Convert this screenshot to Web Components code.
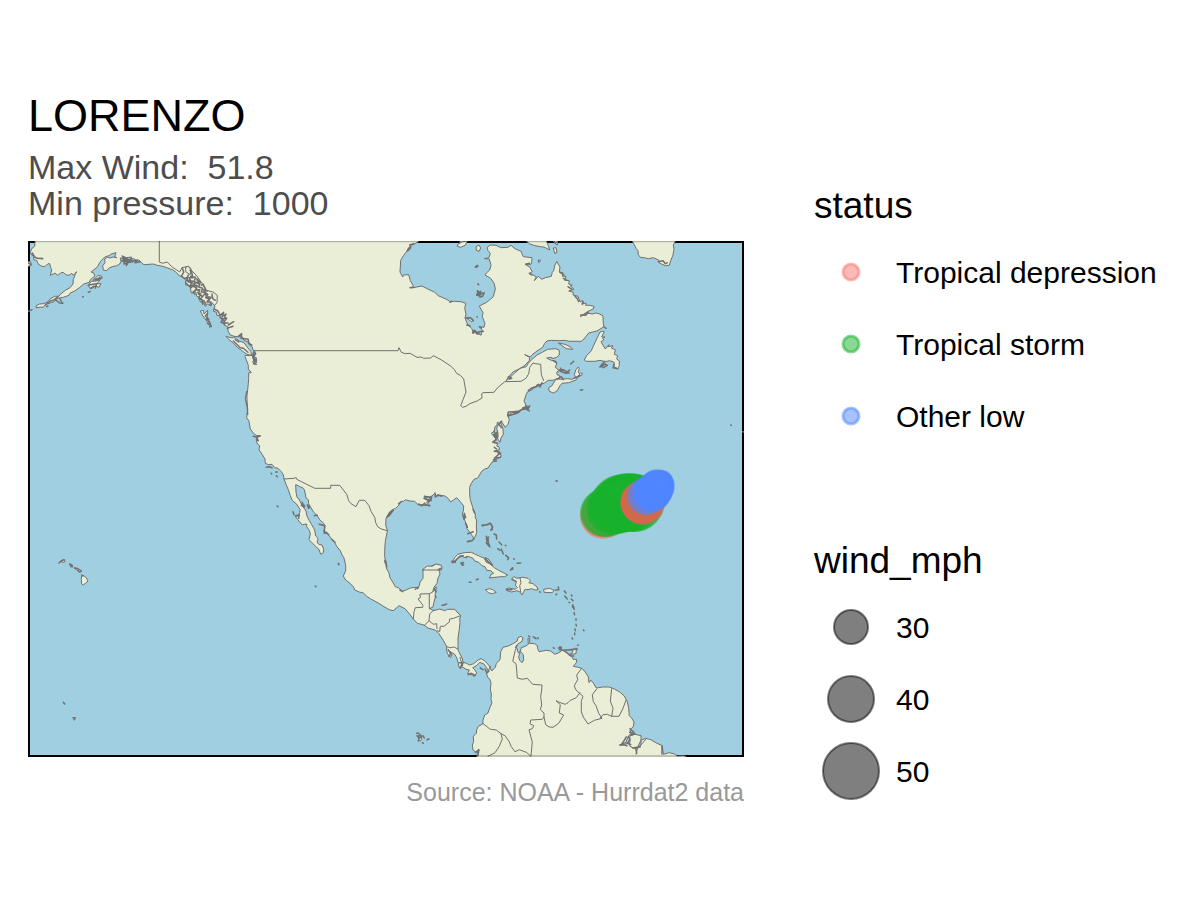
<!DOCTYPE html>
<html lang="en">
<head>
<meta charset="utf-8">
<meta name="viewport" content="width=device-width, initial-scale=1">
<title>LORENZO storm track</title>
<style>
body{margin:0;background:#fff;color:#000;font-family:"Liberation Sans",Arial,sans-serif}
</style>
</head>
<body>
<storm-report>
  <storm-figure slot="figure" name="LORENZO" wind="51.8" pressure="1000">
    <storm-map></storm-map>
    <span slot="caption">Source: NOAA - Hurrdat2 data</span>
  </storm-figure>
  <legend-group slot="legend" heading="status">
    <legend-item radius="8" ring="3" color="#f8766d">Tropical depression</legend-item>
    <legend-item radius="8" ring="3" color="#18b22b">Tropical storm</legend-item>
    <legend-item radius="8" ring="3" color="#5086ff">Other low</legend-item>
  </legend-group>
  <legend-group slot="legend" heading="wind_mph">
    <legend-item radius="17" ring="2" color="#000">30</legend-item>
    <legend-item radius="23" ring="2" color="#000">40</legend-item>
    <legend-item radius="28" ring="2" color="#000">50</legend-item>
  </legend-group>
</storm-report>
<script>
class StormReport extends HTMLElement{
  constructor(){
    super();
    this.attachShadow({mode:'open'}).innerHTML=`
<style>
:host{display:block}
main{box-sizing:border-box;min-height:100vh;padding:0 28px;display:grid;grid-template-columns:minmax(0,1fr) 358px;column-gap:70px;align-content:center;align-items:end}
aside{display:flex;flex-direction:column;gap:87px}
</style>
<main><slot name="figure"></slot><aside><slot name="legend"></slot></aside></main>`;
  }
}
class StormFigure extends HTMLElement{
  connectedCallback(){
    if(this.shadowRoot)return;
    this.attachShadow({mode:'open'}).innerHTML=`
<style>
:host{display:block}
figure{margin:0}
h1{margin:0 0 11px;font-size:45px;line-height:44px;font-weight:400}
p{margin:0;font-size:34px;line-height:36px;color:#4d4d4d;white-space:pre-wrap}
.map{margin:20px 0}
figcaption{font-size:25px;line-height:30px;color:#999;text-align:right}
</style>
<h1>${this.getAttribute('name')}</h1>
<p>Max Wind:  ${this.getAttribute('wind')}</p>
<p>Min pressure:  ${this.getAttribute('pressure')}</p>
<figure><div class="map"><slot></slot></div>
<figcaption><slot name="caption"></slot></figcaption></figure>`;
  }
}
class LegendGroup extends HTMLElement{
  connectedCallback(){
    if(this.shadowRoot)return;
    this.attachShadow({mode:'open'}).innerHTML=`
<style>
:host{display:block}
h2{margin:0 0 8px;font-size:37px;line-height:44px;font-weight:400}
</style>
<h2>${this.getAttribute('heading')}</h2><div role="list"><slot></slot></div>`;
  }
}
class LegendItem extends HTMLElement{
  connectedCallback(){
    if(this.shadowRoot)return;
    this.setAttribute('role','listitem');
    const c=this.getAttribute('color');
    this.attachShadow({mode:'open'}).innerHTML=`
<style>
:host{display:flex;align-items:center;gap:8px;height:72px;font-size:30px;line-height:36px;white-space:nowrap}
svg{width:74px;height:72px;flex:none}
span{padding-top:2px}
</style>
<svg viewBox="0 0 74 72" aria-hidden="true"><circle cx="37" cy="36" r="${this.getAttribute('radius')}" fill="${c}" stroke="${c}" stroke-width="${this.getAttribute('ring')}" fill-opacity=".5" stroke-opacity=".5"/></svg>
<span><slot></slot></span>`;
  }
}

/* Survey sheets: every sheet has an origin on the map and a grid of three units per map unit. */
const sheets={A:[20,235],B:[240,235],C:[460,235],D:[230,390],E:[440,370],G:[300,500],H:[440,520],I:[400,600],J:[20,530]};
const trace=s=>{
  let o=sheets.A,d='',pen='M';
  for(const t of s.trim().split(/\s+/)){
    if(sheets[t])o=sheets[t];
    else if(t==='/'){pen='M'}
    else if(t==='z'){d+='Z';pen='M'}
    else{const[x,y]=t.split(',').map(Number);d+=pen+(o[0]+x/3).toFixed(1)+' '+(o[1]+y/3).toFixed(1);pen='L'}
  }
  return d;
};
const mainland=`
A 45,0 45,22 44,34 36,40 31,52 35,60 42,64 41,74 50,76 54,86 64,93 73,95 80,90 84,86 89,86 92,98 95,105 91,121 100,117 105,114 113,121 122,114 130,112 137,119 147,121 155,115 160,121 165,115 170,110 166,118 160,134 159,147 150,158 136,166 121,178 117,184 104,184 90,192 84,200 72,206 58,207 48,213 49,219 60,216 70,217 78,207 91,204 104,199 111,190 130,187 147,181 151,174 164,168 180,157 190,148 207,142 214,131 224,124 221,114 213,111 222,104 232,96 237,87 241,80 248,72 256,65 267,62 274,57 288,53 284,65 291,68 279,66 270,69 262,67 254,72 255,83 248,92 250,105 259,107 268,99 277,95 290,92 299,87 303,79 301,69 312,70 306,62 319,68 335,66 330,73 342,71 350,77 357,75 366,85 372,89 400,87 412,91 428,94 443,99 459,105 470,113 476,121 490,127 497,136 497,150 510,152 514,174 527,170 530,184 537,186 541,201 549,200 556,214 563,206 573,213 576,203 585,213 580,229 590,232 590,241 601,243 604,253 613,258 612,270 623,275 624,288 630,299 642,304 653,305 668,306 671,316 683,320 688,330 697,335 699,345 706,350 703,365 709,368 710,382 703,388 698,381 704,370 697,361 688,362 676,361 675,364 680,378 685,391 685,402 694,413 686,413 686,430 684,455 682,474 677,490 679,507 683,520 683,540
D 50,3 46,25 52,48 52,65 50,83 57,94 61,117 70,129 78,136 92,138 80,141 84,153 78,148 82,162 89,167 87,179 97,194 105,207 106,220 116,224 126,223 134,233 144,235 154,245 160,254 162,267 168,283 175,299 181,317 187,332 199,341 210,358 209,368 204,379 195,378 203,388 210,398 217,404 230,402 230,410 238,421 241,432 237,449 249,461 262,474 266,477 272,493 280,488 281,478 276,465 267,463 262,459 264,445 257,438 254,420 245,404 238,392 231,378 228,363 221,353 213,340 207,327 201,322 198,306 197,284 205,287 211,291 217,292 223,299 226,312 228,324 235,329 236,341 242,352 252,368 261,376 269,389 281,400 285,408 281,426 293,431 303,445 314,458 321,470 331,482 336,495 341,502 346,520
G 137,198 137,211 134,219 130,228 137,240 150,250 160,260 164,270 178,276 190,279 200,289 211,296 235,309 252,320 268,329 280,332 288,325 297,317 315,326 326,339 340,357 352,370 372,375 384,384 402,389 408,392 416,400 430,421 440,440
I 140,150 142,160 151,173 156,165 149,154 164,163 171,175 175,190 177,202 188,201 198,208 208,210 203,221 219,225 222,230 230,219 224,209 218,203 231,196 239,187 252,192 262,206 265,215 259,220 264,233 269,237 273,250 271,268 274,282 273,298 276,308 269,324 264,339 254,345 249,360 248,372 235,379 230,389 229,400 220,409 221,424 217,435 219,450 229,458 234,449 231,464 230,500
860,500 858,469 850,467 832,468 824,462 808,458 790,463 787,437 771,430 752,419 737,415 723,421 723,434 713,444 697,444 690,431 680,431 660,435 678,427 684,410 693,400 690,389 700,380 702,366 694,353 688,347 686,326 682,305 672,287 658,275 643,267 628,261 608,261 589,264 580,249 572,240 567,248 565,230 556,216 545,205 534,202 520,199 529,188 530,178 519,178 516,170 507,165 500,157 486,151 477,158 464,163 452,153 439,151 417,155 414,149 412,137 404,131 388,130 378,138 364,143 361,154 355,159 351,145 346,142 353,132 366,124 369,114 363,109 354,113 352,123 341,130 325,138 309,142 302,155 300,179 289,190 286,202 275,213 268,198 256,184 244,176 234,180 221,191 209,195 199,190 190,187 186,174 180,162 174,150 174,137 174,114 178,88 180,68 179,57 182,46 174,39 164,28 143,28 134,32 119,27 101,32 92,27
G 388,326 399,321 402,306 406,292 406,280 409,261 405,263 402,273 398,275 402,262 411,250 414,234 420,222 418,214 425,200 419,195 402,194 390,201 371,206 369,214 369,235 360,246 358,257 353,267 346,262 331,264 320,269 307,274 296,264 286,260 280,249 270,233 267,219 259,204 259,188 254,172 254,151 256,124 262,94
D 472,421 467,405 468,385 476,372 485,360 497,355 506,346 513,334 521,334 526,329 539,333 554,334 565,345 577,344 585,338 594,348 599,346 590,337 596,329 605,332 592,328 583,322 604,320 614,310 618,319 632,316 645,318 654,325 662,336 671,329 680,323
E 60,394 71,408 70,423 67,433 74,438 73,447 79,464 80,475
H 87,34 94,43 100,53 106,50 110,37 109,18 110,0
E 106,444 106,433 98,412 91,389 89,372 89,352 93,341 102,328 113,324 125,304 134,297 144,294 156,276 171,273 158,270 172,267 184,259 180,250 175,242 162,244 178,239 178,232 170,228 174,220 159,216 169,211 165,203 154,190 163,184 165,170 171,166 172,157 178,159 170,174 174,190 173,207 180,217 183,204 190,193 189,177 180,154 186,157 196,172 204,163 208,149 202,134 223,133 236,127 248,118 254,119 260,106 265,119 260,116 255,99 252,94 258,75 262,66 277,59 280,52 288,52 290,45 305,42 314,39
C 255,443 265,436 279,436 294,430 300,427 297,420 292,420 290,411 298,407 286,397 290,387 288,379 271,375 260,369 276,367 277,371 290,367 298,360 298,346 288,341 263,343 247,352 231,360 216,373 204,386 199,395 180,400 163,415 150,427 138,438 146,425 160,410 179,401 192,393 208,377 209,367 194,359 211,366 219,357 231,348 248,337 254,325 261,318 274,316 296,317 314,316 328,319 364,319 372,312 386,294 398,291 411,288 432,275 430,265 429,243 419,237 409,234 397,237 380,234 360,245 384,229 400,222 402,214 389,211 377,211 378,204 366,207 368,197 360,200 354,184 339,180 340,172 326,168 342,163 331,153 337,151 326,147 328,137 314,136 318,124 307,124 309,113 298,111 300,96 290,79 284,92 281,107 277,112 274,124 256,128 245,133 235,124 223,137 229,125 209,115 217,110 209,96 195,88 213,88 215,80 216,68 190,65 183,49 165,41 153,31 144,37 122,38 108,31 90,30 81,38 84,47 91,55 87,68 73,71 88,72 93,91 89,105 80,113 75,120 92,130 103,146 106,162 100,185 80,202 58,213 69,233 67,245 75,265 72,277 62,275 67,287 63,301 54,295 47,287 41,295 35,280 24,271 19,259 15,249 18,237 14,221 17,205 3,200
B 644,199 629,200 624,195 606,187 595,182 584,172 563,162 546,153 530,156 515,159 520,152 511,137 506,119 490,120 488,126 480,111 482,76 491,61 501,48 508,46 506,39 519,29 534,21 545,0 z`;
const land=[
`C 290,431 303,433 322,431 338,433 346,426 352,420 361,414 367,415 366,420 355,424 348,435 326,443 306,445 300,452 291,468 280,474 268,469 266,458 276,452 284,438 z`,
`C 343,419 347,405 355,396 358,401 354,411 360,417 348,429 z`,
`C 302,398 305,406 314,407 326,411 318,416 300,407 z`,
`C 428,289 420,291 412,308 401,331 393,349 380,361 373,375 379,379 405,379 420,376 436,380 449,377 463,382 460,394 473,401 478,392 478,378 470,372 473,362 463,358 466,344 454,339 459,332 443,335 447,329 436,342 430,332 423,320 431,315 428,309 435,306 425,306 433,290 z`,
`C 295,324 315,328 330,335 338,343 319,341 z`,
`C 512,10 523,29 528,40 534,47 535,59 541,67 553,68 565,71 580,68 596,75 598,84 616,92 628,91 632,77 639,60 642,43 640,31 649,12 z`,
`C 190,10 208,26 221,31 240,35 252,36 269,45 265,32 260,20 253,10 z`,
`C 276,10 288,28 292,30 293,10 z`,`C 280,39 288,38 291,53 284,55 z`,`C 48,35 57,30 62,39 57,49 49,46 z`,
`C 0,10 0,34 14,30 21,10 z`,`C 234,75 242,76 237,83 z`,`C 19,248 34,248 41,256 34,260 z`,
`B 654,27 668,20 682,18 676,31 662,37 652,34 z`,
`A 618,304 632,308 645,308 657,318 672,323 682,337 692,349 695,361 681,358 667,348 652,337 640,324 626,313 z`,
`A 541,228 550,226 552,237 563,226 562,245 568,260 575,276 565,268 558,255 549,243 z`,
`A 205,151 214,139 229,138 242,132 231,146 243,146 237,157 226,153 216,160 209,159 z`,
`A 219,136 235,121 246,124 238,134 z`,
`A 497,96 506,94 513,101 511,119 497,110 z`,
`H 36,128 44,113 53,103 73,98 94,97 106,103 122,110 133,115 139,127 151,132 163,143 178,152 190,158 203,165 194,170 182,170 165,172 148,174 154,163 161,160 152,152 140,151 135,140 126,137 116,127 104,123 99,115 87,110 78,109 81,114 64,109 53,115 46,125 z`,
`H 215,176 222,170 231,175 248,172 264,175 272,183 266,188 279,191 291,201 294,209 286,210 274,206 264,209 255,208 246,225 240,216 231,212 214,216 199,211 199,206 207,204 226,208 232,202 226,196 229,185 215,178 z`,
`H 136,209 149,206 158,209 169,217 157,221 145,218 z`,
`H 311,208 329,205 342,211 337,218 312,217 z`,
`H 62,130 70,126 72,132 66,137 z`,`H 138,55 147,50 143,64 151,82 143,76 z`,`H 135,112 147,119 158,135 145,128 z`,
`H 264,355 269,355 269,367 265,371 z`,`H 210,150 217,143 220,148 z`,
`I 507,149 529,147 528,161 510,163 518,157 519,151 z`,
`I 690,406 705,403 723,407 723,420 713,442 700,444 689,438 z`,
`E 203,136 216,128 238,126 224,133 z`,
`D 216,339 225,347 223,353 217,349 z`,`D 234,344 240,351 235,356 z`,
`D 576,540 592,528 607,529 618,522 634,526 636,533 634,540 z`,
`J 185,137 192,137 199,144 204,153 197,159 190,165 185,162 184,149 z`,
`J 149,102 157,104 158,110 152,111 z`,`J 163,113 173,115 184,122 181,127 172,122 z`,`J 125,91 134,89 134,96 125,97 z`,
`I 55,412 62,410 65,419 57,424 z`,
`A 20,80 32,80 34,92 20,94 z`
];
const lake=`I 361,154 370,164 371,180 366,188 359,181 356,171 z`;
const borders=`
B 42,347 474,347 477,338 484,352 496,356 510,355 531,367 543,366 551,370 572,369 580,362 605,375 633,394 642,403 651,416 661,421 671,432 678,471 669,494 C 2,512
C 8,517 18,514 29,506 53,497 66,489 65,477 68,473 102,472 112,459 134,440 183,439 198,430 206,416 209,397 219,384 226,386 242,388 244,419 251,437
/ A 418,18 418,81 428,85 442,81 455,95 479,111 486,98 505,94 516,108 530,122 545,144 559,166 579,171 592,181 591,203 584,211
/ D 162,267 193,265 198,262 200,268 254,295 302,295 302,286 329,286 350,313 356,332 363,341 378,350 388,331 404,331 417,347 423,364 434,382 437,398 443,410 454,417 472,422
/ G 340,357 342,335 346,323 368,322 369,316 354,297 361,293 360,282 388,281 397,277 / 388,281 388,325
/ G 402,329 389,342 387,362 374,375 / 387,362 400,373 410,371 411,386 / 412,392 419,395 421,379 432,379 448,366 449,357 461,355 481,347 / 440,440 451,443 463,441 473,447
/ I 180,172 183,184 190,188 187,199 / 271,199 265,213
/ I 352,136 346,151 338,184 348,191 350,210 352,234 367,238 382,235 398,253 426,255 425,270 422,289 425,315 421,329 432,339 432,351 427,358 392,360 390,371 401,377 397,386 387,389 397,426 393,468
/ 432,351 437,374 448,381 459,382 476,370 491,345 478,339 481,314 468,302 478,307 496,313 504,308 511,301 529,293 540,278
/ 545,205 530,225 533,239 523,257 527,269 537,278 549,289 544,304 544,335 550,351 564,372 583,361 606,355 596,340 588,317 580,305 577,284 590,267
/ 600,354 609,344 622,343 635,349 639,325 631,303 635,266 / 635,349 657,349 668,327 678,301
/ 392,468 379,457 358,449 345,455 334,440 327,424 315,407 303,401 289,390 271,388 248,370 / 303,401 307,417 298,439 285,458 264,469
/ H 240,174 243,188 239,197 242,216
/ I 708,463 712,447 740,415`;
const crinkle=`
A 487,99 491,112 484,124 495,131 503,126 500,137 513,143 508,128 518,128 515,111 510,106 / 498,144 513,158 521,150 530,162 518,172 525,178 / 512,124 526,127 523,140 537,146 530,131 541,141 536,156 548,160 544,171 556,172 550,183 / 533,172 542,177 536,190 545,194 548,207 / 552,170 563,178 557,188 568,191 561,201 573,201 569,211 / 576,177 578,191 586,196 / 505,120 501,135 519,139 511,151 524,156 / 529,142 519,148 532,152 527,165 539,164 535,177 548,184 541,193 552,198 558,208 / 562,168 551,164 560,185 573,187 565,198 / 544,151 549,147 557,163
/ 582,222 594,228 600,241 611,232 606,245 618,237 612,251 620,249 611,263 624,264 / 600,248 610,252 603,261 615,267 / 625,270 641,260 / 622,280 639,274
/ 640,318 650,328 661,338 670,340 684,352 / 646,314 656,321 / 655,304 665,296 663,310 676,312 684,312 687,325 695,330 / 701,351 707,356 699,366 708,376 701,386 709,388 / 700,355 698,367 704,380
/ 563,235 556,243 566,253 559,252 570,263 563,266 573,271 569,276 / 305,78 315,74 312,87 323,85 319,92 328,76 338,81 333,70 / 340,78 352,75 345,83 361,80 / 320,68 318,80 331,82 308,71 329,74 / 307,65 322,72 311,80
/ 205,151 219,148 230,146 226,159 / 238,127 233,135 225,133 246,129 / 212,160 222,153 / 205,172 211,169 / 188,186 190,185 / 107,195 119,204 129,205 / 120,192 125,201 / 64,70 68,71 / 37,54 44,66 52,70 68,71 / 76,210 90,199 103,194 112,187 / 80,215 84,213
/ B 506,39 502,47 512,38 509,30 521,26 / 706,96 712,91 / 714,146 715,149 / 710,181 719,171 712,169 720,187 / 699,295 705,289 711,297 717,296 / 680,270 690,272 / 679,250 690,248 700,257 / 510,158 520,157 / 630,202 634,199
/ C 49,97 54,93 / 52,167 64,177 52,181 67,185 73,174 59,175 50,178 62,169 / 55,147 56,149 / 51,245 52,246 / 58,275 64,279 / 38,292 43,286 51,293 59,290 70,289
/ 279,14 285,24 292,22 / 145,425 155,430 148,432 / 280,377 289,383 / 420,396 435,387 442,391 430,398 423,392 / 463,389 459,398 473,401 / 332,387 341,379 / 362,465 368,464 / 297,405 310,404 320,412 329,405 / 300,408 313,413 328,414 / 291,433 304,425 310,434 / 342,430 360,422 / 145,531 160,530 175,529 188,522 199,521 208,513 203,526 198,514 / 205,466 216,459 231,454 235,448 240,456 246,443 / 433,276 438,280 / 420,395 434,379
/ 367,208 370,201 / 362,240 377,241 385,232 / 300,112 312,120 / 310,130 321,136 / 324,155 335,163 / 345,184 352,191 356,200 / 197,88 208,85 / 208,115 215,120 / 595,80 609,77 616,86 622,83
/ D 70,139 82,142 89,137 / 80,144 85,152 / 109,232 118,230 126,233 / 123,250 125,252 / 137,246 142,246 / 139,257 142,260 / 141,348 144,350 / 189,365 192,374 / 216,337 223,350 214,346 / 232,345 237,355 / 253,377 262,376 / 268,403 284,407 283,430 291,428 / 305,448 315,457 / 325,522 327,524 / 470,383 479,367 490,361 476,379 / 506,341 513,336 / 583,319 596,321 604,326 599,333 582,325 / 605,319 603,329 595,337 / 566,342 575,347 584,343 / 585,346 595,345 599,348 / 615,309 616,321 624,314 635,319 / 699,376 702,388 / 707,401 712,410 / 713,455 720,452 / 465,511 470,530 / 667,518 678,510 690,498 700,497 / 695,518 699,526 / 197,377 208,374 206,385
/ E 204,128 204,138 224,131 237,126 / 248,114 257,111 262,119 269,108 / 267,122 268,123 / 162,184 166,192 172,186 168,204 161,194 173,199 166,210 158,216 170,220 / 163,244 177,246 174,255 163,265 181,262 / 170,237 163,232 / 170,258 182,249 / 348,332 352,334 / 421,60 427,60 / 126,466 143,464 149,459 156,468 157,479 152,480 / 83,491 100,485 / 73,430 77,443 / 79,463 82,472 / 99,418 104,430 / 185,154 177,163 184,173 / 276,55 289,50 292,46
/ H 82,65 96,62 103,55 / 127,17 144,13 151,10 158,20 153,30 / 162,42 169,45 170,57 / 177,66 185,74 / 196,76 198,77 / 173,86 180,91 / 184,87 190,102 / 197,106 206,113 203,119 / 221,116 223,118 / 231,130 242,129 / 212,150 218,143 / 139,68 148,78 139,49 145,63 / 136,116 150,129 156,136 / 88,187 93,187 / 109,179 115,177 / 299,215 301,217 / 346,210 356,209 355,201 / 348,224 350,222 / 373,213 378,219 / 374,228 382,237 / 394,225 396,228 / 394,237 399,242 / 387,247 389,248 / 398,254 402,263 / 397,259 403,268 / 402,278 404,284 / 408,296 408,301 / 408,313 409,317 / 405,327 406,332 / 404,339 404,344 / 396,354 398,357 / 430,330 432,332 / 413,376 415,375 / 408,385 412,388 / 359,381 364,382 / 280,350 285,355 / 284,353 288,356 / 293,353 295,356 / 266,348 269,350 / 217,178 228,184 / 200,209 216,209
/ G 115,190 117,194 / 46,258 48,260 / 456,184 466,187 / 484,188 489,195 / 403,268 409,275 / 406,289 408,292 / 426,316 431,315 / 433,315 440,312 / 254,184 260,199 / 300,270 308,275 / 346,268 354,261 / 414,209 423,205 / 78,96 86,104
/ I 145,149 152,162 147,169 / 177,188 187,188 181,205 / 241,204 249,209 / 255,207 261,219 267,213 / 205,224 214,220 226,226 / 475,144 484,145 / 478,149 485,149 / 460,143 463,145 / 488,151 499,150 525,148 / 497,155 511,167 521,168 / 690,386 702,397 693,406 705,402 689,397 / 679,411 671,424 664,434 / 686,410 690,421 682,429 692,434 / 659,435 672,434 681,437 / 226,457 237,449 234,466 / 50,400 57,400 / 55,407 61,404 65,411 58,413 54,409 / 69,407 73,414 / 81,419 87,417 / 67,428 70,430 / 707,444 710,460 / 700,444 721,440 / 786,438 786,462 / 51,407 58,414 55,422
/ J 117,99 122,94 131,89 / 149,102 157,110 / 164,115 173,116 177,125 184,123 / 185,135 189,138 / 130,517 134,522 / 159,563 166,564 162,569
/ A 24,230 36,224 / 24,84 32,88
/ C 812,570 814,571 / 848,590 850,591`;

class StormMap extends HTMLElement{
  constructor(){
    super();
    const fixes=[
      ['#f8766d',[[603,516,21],[603,516,22],[604,515,20]]],
      ['#18b22b',[[604,513,23],[607,512,24],[611,510,24],[614,508,25],[617,506,27],[620,504,28],[623,503,28],[626,503,28],[628,502,28],[631,502,28],[633,503,28],[635,503,28],[622,504,27],[629,503,28],[618,506,26]]],
      ['#e8604f',[[641,502,20],[642,503,20],[643,503,21]]],
      ['#5086ff',[[646,496,18],[648,495,17],[652,493,18],[653,492,18],[654,490,17],[656,488,17],[658,487,15],[659,486,15],[659,485,14],[662,484,11],[655,490,17],[653,492,17],[656,488,16],[663,480,9],[657,484,14]]]
    ];
    const dots=fixes.map(([c,a])=>a.map(([x,y,r])=>`<circle cx="${x}" cy="${y}" r="${r}" fill="${c}" stroke="${c}"/>`).join('')).join('');
    this.attachShadow({mode:'open'}).innerHTML=`
<style>
:host{display:block}
svg{display:block;width:100%;height:auto}
.coast{fill:#ebeed7;stroke:#707070;stroke-linejoin:round}
.line{fill:none;stroke:#707070;stroke-linejoin:round;stroke-linecap:round}
.crinkle{stroke-width:1.5}
.fixes{fill-opacity:.5;stroke-opacity:.5;stroke-width:2}
</style>
<svg viewBox="28 241 716 516" role="img" aria-label="Map of the track of the storm over the Atlantic">
<rect x="29" y="242" width="714" height="514" fill="#9fcfe0" stroke="#000" stroke-width="2"/>
<path class="coast" d="${trace(mainland)}"/>
${land.map(s=>`<path class="coast" d="${trace(s)}"/>`).join('')}
<path d="${trace(lake)}" fill="#9fcfe0" stroke="#707070"/>
<path class="line" d="${trace(borders)}"/>
<path class="line crinkle" d="${trace(crinkle)}"/>
<path d="M28 241.5H744M28 756H744" stroke="#000" stroke-opacity=".25" stroke-width="1.5"/>
<g class="fixes">${dots}</g>
</svg>`;
  }
}
customElements.define('storm-map',StormMap);
customElements.define('legend-item',LegendItem);
customElements.define('legend-group',LegendGroup);
customElements.define('storm-figure',StormFigure);
customElements.define('storm-report',StormReport);
</script>
</body>
</html>
